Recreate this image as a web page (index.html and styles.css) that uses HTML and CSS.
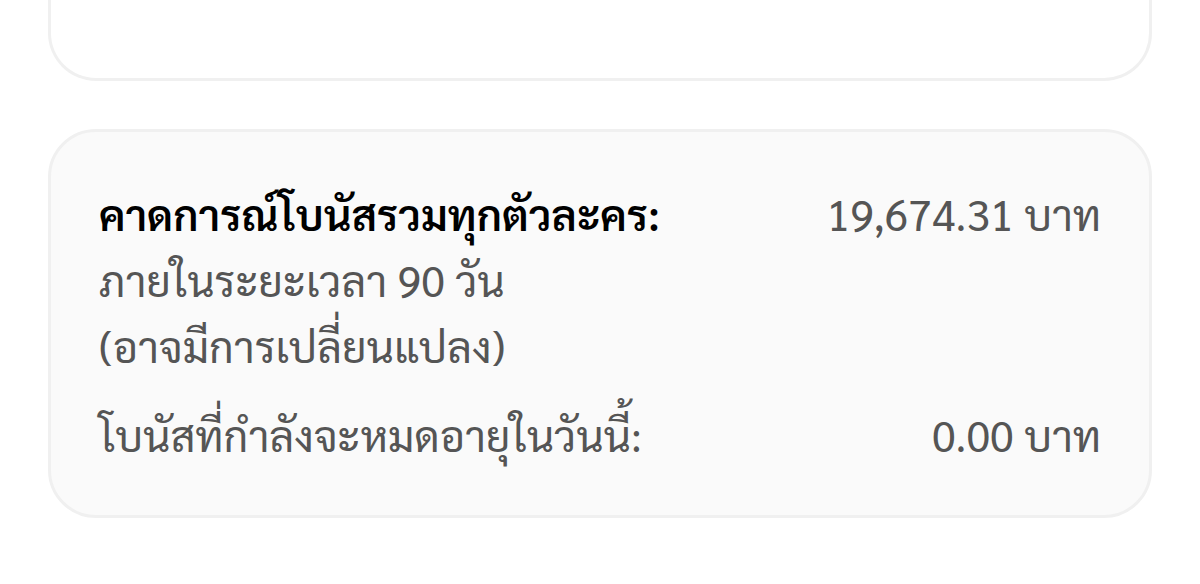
FILE: index.html
```html
<!DOCTYPE html>
<html lang="th">
<head>
<meta charset="utf-8">
<meta name="viewport" content="width=device-width, initial-scale=1">
<title>โบนัส</title>
<link rel="stylesheet" href="styles.css">
</head>
<body>
<main class="page">
  <section class="card card-previous"></section>
  <section class="card card-summary">
    <dl class="rows">
      <div class="row">
        <dt class="label"><strong class="title">คาดการณ์โบนัสรวมทุกตัวละคร:</strong><br>ภายในระยะเวลา 90 วัน<br>(อาจมีการเปลี่ยนแปลง)</dt>
        <dd class="value">19,674.31 บาท</dd>
      </div>
      <div class="row">
        <dt class="label">โบนัสที่กำลังจะหมดอายุในวันนี้:</dt>
        <dd class="value">0.00 บาท</dd>
      </div>
    </dl>
  </section>
</main>
</body>
</html>
```

FILE: styles.css
```css
* {
  box-sizing: border-box;
}

body {
  margin: 0;
  background: #fff;
  color: #555;
  font-family: Sarabun, "TH Sarabun New", "Noto Sans Thai Looped", "Noto Looped Thai", Loma, Garuda, Waree, "Noto Sans", "Noto Sans Thai", sans-serif;
  font-size: 43px;
  line-height: 66px;
}

.page {
  display: flex;
  flex-direction: column;
  gap: 48px;
  padding: 0 48px 66px;
}

.card {
  border: 3px solid #f0f0f0;
  border-radius: 48px;
  padding: 48px;
}

.card-previous {
  border-top: 0;
  border-top-left-radius: 0;
  border-top-right-radius: 0;
  padding: 30px 48px 48px;
}

.card-summary {
  background: #fafafa;
}

.rows {
  display: flex;
  flex-direction: column;
  gap: 23px;
  margin: 0;
}

.row {
  display: flex;
  justify-content: space-between;
  gap: 24px;
}

.title {
  color: #000;
  font-weight: 600;
}

.value {
  margin: 0;
  text-align: right;
  white-space: nowrap;
}
```
